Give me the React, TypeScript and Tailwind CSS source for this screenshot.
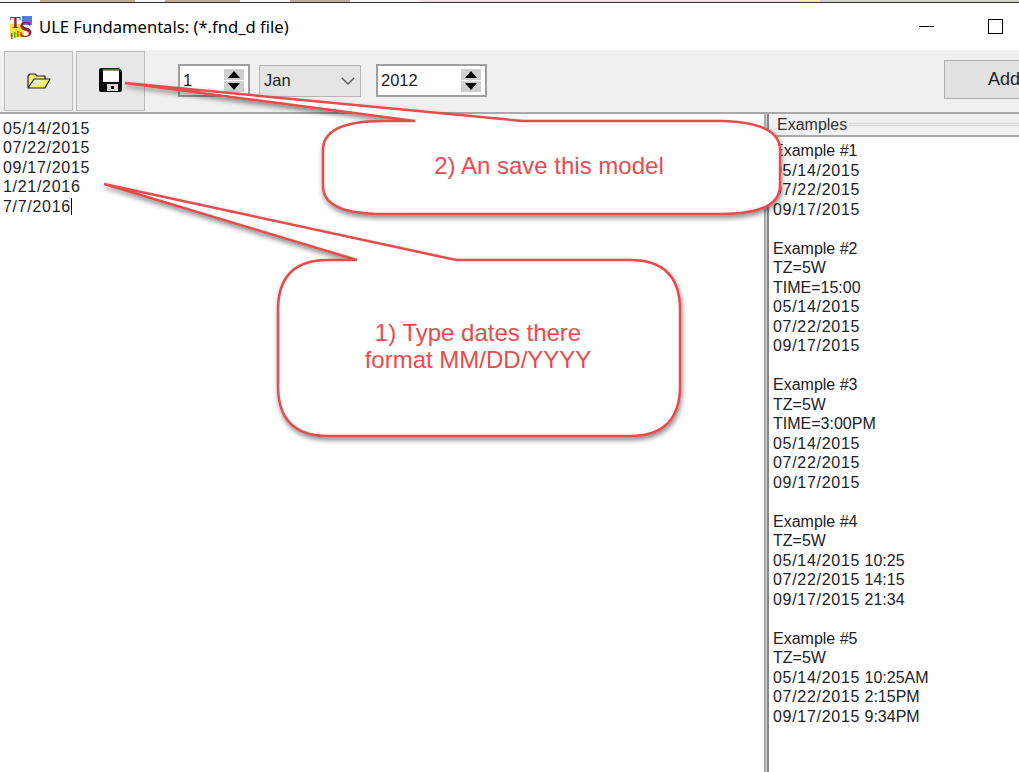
import React from "react";

const sans = { fontFamily: '"Liberation Sans", Arial, sans-serif' };

function Spinner({ value, width }: { value: string; width: string }) {
  return (
    <div className={`${width} h-[33px] border-2 border-[#a0a0a0] bg-white flex items-center justify-between pl-[3px] pr-[4px] text-[16.5px] text-[#222]`}>
      <span>{value}</span>
      <div className="flex flex-col gap-[1px]">
        {[0, 1].map((i) => (
          <div key={i} className="w-[20px] h-[11px] bg-[#cfcfcf] flex items-center justify-center">
            <svg width="12" height="7" viewBox="0 0 12 7">
              <path d={i === 0 ? "M6 0 L12 7 L0 7 Z" : "M0 0 L12 0 L6 7 Z"} fill="#000" />
            </svg>
          </div>
        ))}
      </div>
    </div>
  );
}

function Line({ text }: { text: string }) {
  const m = text.match(/^(\d+\/\d+\/\d+)(.*)$/);
  if (!m) return <div>{text}</div>;
  return (
    <div>
      <span className="tracking-[0.7px]">{m[1]}</span>
      {m[2]}
    </div>
  );
}

const left = ["05/14/2015", "07/22/2015", "09/17/2015", "1/21/2016"];
const examples = [
  ["Example #1", "05/14/2015", "07/22/2015", "09/17/2015"],
  ["Example #2", "TZ=5W", "TIME=15:00", "05/14/2015", "07/22/2015", "09/17/2015"],
  ["Example #3", "TZ=5W", "TIME=3:00PM", "05/14/2015", "07/22/2015", "09/17/2015"],
  ["Example #4", "TZ=5W", "05/14/2015 10:25", "07/22/2015 14:15", "09/17/2015 21:34"],
  ["Example #5", "TZ=5W", "05/14/2015 10:25AM", "07/22/2015 2:15PM", "09/17/2015 9:34PM"],
];

export default function App() {
  return (
    <div className="relative w-[1019px] h-[772px] overflow-hidden bg-white" style={sans}>
      <div className="h-[3px] border-b border-[#333] flex">
        <div className="w-[40px] bg-[#f4f4f4]" />
        <div className="w-[95px] bg-[#b8b09a]" />
        <div className="w-[30px] bg-[#f4f4f4]" />
        <div className="w-[75px] bg-[#b8b09a]" />
        <div className="w-[50px] bg-[#f4f4f4]" />
        <div className="w-[60px] bg-[#b8b09a]" />
        <div className="w-[70px] bg-[#f4f4f4]" />
        <div className="w-[380px] bg-[#ecdfe6]" />
        <div className="w-[20px] bg-[#f2eda0]" />
        <div className="flex-1 bg-[#d2d2cc]" />
      </div>
      <div className="h-[47px] bg-white flex items-center relative">
        <svg className="ml-[9px] mt-[2px] overflow-visible" width="25" height="25" viewBox="0 0 25 25">
          <rect x="1" y="9" width="14" height="13" fill="#f2e23a" />
          <rect x="13" y="1" width="10" height="9" fill="#5a78d8" />
          <rect x="2" y="18" width="1.5" height="6" fill="#e23131" />
          <rect x="5" y="17" width="1.5" height="6" fill="#2fb52f" />
          <rect x="8" y="16" width="1.5" height="6" fill="#e23131" />
          <text x="1" y="13" fontSize="16" fontWeight="700" fill="#8c2a3a" fontFamily="Liberation Serif">T</text>
          <text x="10" y="22" fontSize="24" fontWeight="700" fill="#8c2a3a" fontFamily="Liberation Serif">S</text>
        </svg>
        <span className="ml-[5px] mt-[1px] text-[16.6px] text-black" style={{ fontFamily: '"Noto Sans", sans-serif' }}>ULE Fundamentals: (*.fnd_d file)</span>
        <div className="ml-auto mr-[16px] flex items-center gap-[54px]">
          <div className="w-[15px] h-[1px] bg-black" />
          <div className="w-[15px] h-[15px] border border-black" />
        </div>
      </div>
      <div className="h-[64px] bg-[#f0f0f0] border-b-[2px] border-[#a8a8a8] flex items-start pt-[1px] pl-[4px]">
        <button className="w-[69px] h-[60px] bg-[#e8e8e8] border border-[#bdbdbd] flex items-center justify-center">
          <svg width="24" height="16" viewBox="0 0 24 16">
            <path d="M1 15 V3 L3 1 H8 L10 3 H18 V6 H7 L1 15 L18 15 L23 6 H18" fill="#f5ef70" stroke="#222" strokeWidth="1.2" strokeLinejoin="round" />
          </svg>
        </button>
        <button className="ml-[3px] w-[69px] h-[60px] bg-[#e8e8e8] border border-[#bdbdbd] flex items-center justify-center">
          <svg className="-mt-[3px]" width="23" height="24" viewBox="0 0 23 24">
            <path d="M2 0 H20 L23 3 V22 Q23 24 21 24 H2 Q0 24 0 22 V2 Q0 0 2 0 Z" fill="#0a0a0a" />
            <rect x="4" y="1" width="16" height="1.5" fill="#ee3333" />
            <rect x="4" y="2.5" width="16" height="11.5" fill="#fff" />
            <rect x="8" y="16" width="11" height="7" fill="#d8d8d8" />
            <rect x="12" y="18" width="3" height="3" fill="#000" />
          </svg>
        </button>
        <div className="flex items-center mt-[13px] ml-[33px]">
          <Spinner value="1" width="w-[72px]" />
          <div className="ml-[9px] w-[102px] h-[32px] bg-[#e4e4e4] border border-[#b5b5b5] flex items-center justify-between px-[4px] text-[16.5px] text-[#222]">
            <span>Jan</span>
            <svg width="14" height="8" viewBox="0 0 14 8" className="mr-[1px]"><path d="M1 1 L7 7 L13 1" stroke="#555" strokeWidth="1.3" fill="none" /></svg>
          </div>
          <div className="ml-[15px]"><Spinner value="2012" width="w-[111px]" /></div>
        </div>
        <button className="ml-auto mt-[9px] w-[90px] h-[39px] shrink-0 -mr-[15px] bg-[#e1e1e1] border border-[#adadad] text-left pl-[43px] text-[18px] text-[#222]">Add</button>
      </div>
      <div className="flex h-[658px]">
        <div className="w-[764px] shrink-0 pt-[4.7px] pl-[3px] text-[16px] leading-[19.5px] text-[#222]">
          {left.map((l) => <Line key={l} text={l} />)}
          <div className="flex items-center"><span className="tracking-[0.7px]">7/7/2016</span><span className="w-[1px] h-[17px] bg-black" /></div>
        </div>
        <div className="w-[5px] shrink-0 bg-[#d8d8d8] border-l-2 border-r-2 border-l-[#a8a8a8] border-r-[#858585]" />
        <div className="flex-1 flex flex-col">
          <div className="h-[23px] bg-[#f0f0f0] border-b-2 border-[#a8a8a8] flex items-center pl-[8px] text-[16px] text-[#333]">
            <span>Examples</span>
            <div className="ml-[2px] flex-1 h-[3px] border-t border-b border-[#d4d4d4]" />
          </div>
          <div className="pt-[4px] pl-[4px] text-[16px] leading-[19.5px] text-[#222] flex flex-col gap-[19.5px]">
            {examples.map((ex) => (
              <div key={ex[0]}>{ex.map((l, i) => <Line key={i} text={l} />)}</div>
            ))}
          </div>
        </div>
      </div>
      <svg className="absolute inset-0 pointer-events-none" width="1019" height="772" viewBox="0 0 1019 772">
        <defs>
          <filter id="s" x="-10%" y="-10%" width="120%" height="130%">
            <feDropShadow dx="1" dy="3" stdDeviation="2.5" floodColor="#000" floodOpacity="0.45" />
          </filter>
        </defs>
        <path filter="url(#s)" d="M125 83 L522 121 H720 Q780 122 780 150 V186 Q780 214 720 214 H383 Q323 214 323 186 V150 Q323 121 383 121 H415 Z" fill="#fff" stroke="#e84c4c" strokeWidth="2.5" />
        <path filter="url(#s)" d="M104 184 L456 260 H630 Q680 260 680 310 V386 Q680 436 630 436 H328 Q278 436 278 386 V310 Q278 260 328 260 H357 Z" fill="#fff" stroke="#e84c4c" strokeWidth="2.5" />
        <text x="549" y="174" textAnchor="middle" fontSize="24" fill="#e84c4c" fontFamily="Liberation Sans">2) An save this model</text>
        <text x="478" y="341" textAnchor="middle" fontSize="24" fill="#e84c4c" fontFamily="Liberation Sans">1) Type dates there</text>
        <text x="478" y="368" textAnchor="middle" fontSize="24" fill="#e84c4c" fontFamily="Liberation Sans">format MM/DD/YYYY</text>
      </svg>
    </div>
  );
}
